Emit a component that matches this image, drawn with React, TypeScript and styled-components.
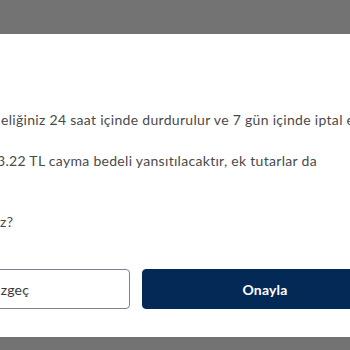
import React from "react";
import styled, { createGlobalStyle } from "styled-components";

const Global = createGlobalStyle`
  html, body { margin: 0; padding: 0; background: #737373; }
  body { width: 350px; height: 350px; overflow: hidden; font-family: "Lato", "Open Sans", sans-serif; }
`;

const Page = styled.div`
  width: 350px;
  height: 350px;
  display: flex;
  flex-direction: column;
  overflow: hidden;
  background: #737373;
`;

const Backdrop = styled.div`
  height: 34px;
  flex: none;
  background: #737373;
`;

const Dialog = styled.div`
  height: 303px;
  flex: none;
  background: #ffffff;
  display: flex;
  flex-direction: column;
  overflow: hidden;
`;

const Body = styled.div`
  padding-top: 74px;
  display: flex;
  flex-direction: column;
`;

const Para = styled.p<{ $shift: number; $after: number }>`
  margin: 0 0 ${(p) => p.$after}px ${(p) => p.$shift}px;
  font-size: 14px;
  line-height: 24px;
  color: #4a4a4a;
  white-space: nowrap;
  letter-spacing: 0.3px;
`;

const Actions = styled.div`
  margin-top: 35px;
  margin-left: -116px;
  display: flex;
  gap: 12px;
`;

const Button = styled.button<{ $primary?: boolean }>`
  width: 246px;
  height: 40px;
  flex: none;
  border-radius: 4px;
  font-family: "Lato", "Open Sans", sans-serif;
  font-size: 14px;
  letter-spacing: 0.2px;
  font-weight: ${(p) => (p.$primary ? 700 : 400)};
  color: ${(p) => (p.$primary ? "#ffffff" : "#3a3a3a")};
  background: ${(p) => (p.$primary ? "#032a57" : "#ffffff")};
  border: 1px solid ${(p) => (p.$primary ? "#032a57" : "#7b8290")};
  padding: 0;
`;

export default function App() {
  return (
    <>
      <Global />
      <Page>
        <Backdrop />
        <Dialog>
          <Body>
            <Para $shift={1} $after={17}>
              eliğiniz 24 saat içinde durdurulur ve 7 gün içinde iptal edilir.
            </Para>
            <Para $shift={-3} $after={37}>
              3.22 TL cayma bedeli yansıtılacaktır, ek tutarlar da
            </Para>
            <Para $shift={0} $after={0}>
              z?
            </Para>
          </Body>
          <Actions>
            <Button>Vazgeç</Button>
            <Button $primary>Onayla</Button>
          </Actions>
        </Dialog>
      </Page>
    </>
  );
}
